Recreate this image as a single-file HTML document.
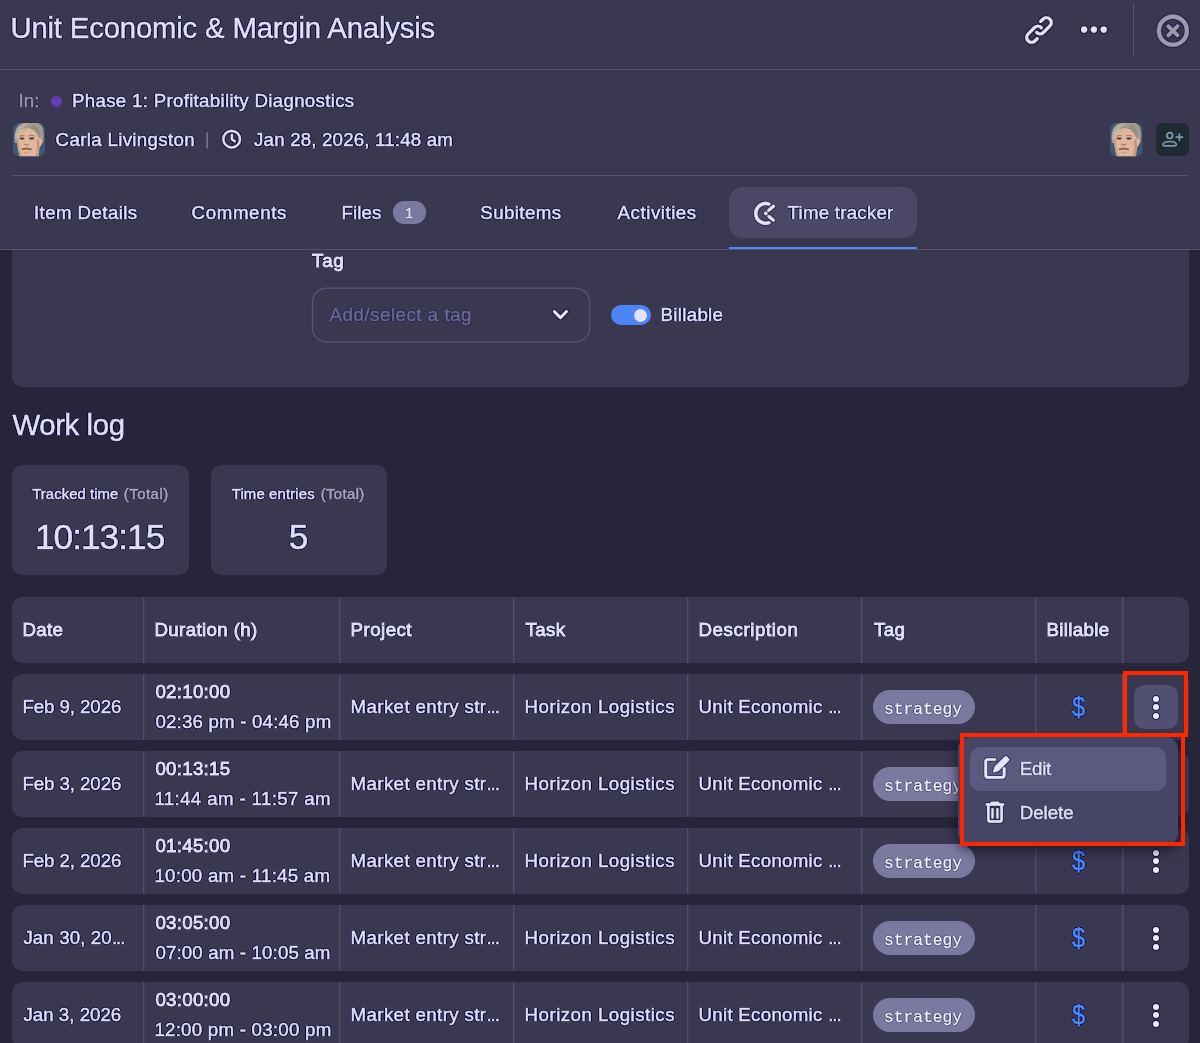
<!DOCTYPE html>
<html lang="en">
<head>
<meta charset="utf-8">
<title>Unit Economic &amp; Margin Analysis</title>
<style>
html,body{margin:0;padding:0;}
body{width:1200px;height:1043px;overflow:hidden;position:relative;background:#272539;font-family:"Liberation Sans",sans-serif;}
.a{position:absolute;box-sizing:border-box;}
.t{position:absolute;white-space:pre;line-height:1;font-family:"Liberation Sans",sans-serif;z-index:2;text-shadow:1px 0 .4px #06053c,-1px 0 .4px #06053c,0 1px .4px #06053c,0 -1px .4px #06053c,1px 0 .4px #06053c,-1px 0 .4px #06053c,0 1px .4px #06053c,0 -1px .4px #06053c;}
.ts{text-shadow:1px 0 .4px rgba(6,5,60,.45),-1px 0 .4px rgba(6,5,60,.45),0 1px .4px rgba(6,5,60,.45),0 -1px .4px rgba(6,5,60,.45);}
.hdr{left:0;top:0;width:1200px;height:249px;background:#3a3750;}
.ln{background:#56536e;}
.panel{left:12px;top:250px;width:1177px;height:136.5px;background:#3a3750;border-radius:0 0 10px 10px;}
.sel{left:312px;top:288px;width:278px;height:54px;border:1px solid #524f6b;border-radius:16px;}
.tog{left:611px;top:305px;width:40px;height:20px;border-radius:10px;background:#4d85f6;}
.knob{left:634.2px;top:308.5px;width:13px;height:13px;border-radius:50%;background:#e2e1f7;}
.card{top:465px;width:176.5px;height:110px;border-radius:10px;background:#3a3750;}
.row{left:12px;width:1177px;height:66px;border-radius:10px;background:#3a3750;}
.vs{width:2px;height:66px;background:linear-gradient(90deg,#514e6a 50%,#423f5a 50%);}
.pill{left:873px;width:101.600px;height:33.600px;border-radius:17px;background:#7c79a1;}
.dol{font-size:27.500px;color:#4d8af5;-webkit-text-stroke:.6px #4d8af5;transform:scaleX(.86);transform-origin:0 0;z-index:2;text-shadow:1px 0 .4px #06053c,-1px 0 .4px #06053c,0 1px .4px #06053c,0 -1px .4px #06053c,1px 0 .4px #06053c,-1px 0 .4px #06053c,0 1px .4px #06053c,0 -1px .4px #06053c;}
.kb{left:1134px;width:44px;height:44px;border-radius:10.500px;background:#525070;}
.dot{width:6.200px;height:6.200px;border-radius:50%;background:#eceaf6;left:1152.900px;box-shadow:0 0 .6px .9px rgba(6,5,60,.7);}
.menu{left:958px;top:737px;width:220px;height:108px;border-radius:12px;background:#464566;box-shadow:0 4px 12px 1px rgba(8,8,20,.6);z-index:5;}
.mi{left:970px;top:747px;width:196px;height:44px;border-radius:10px;background:#5b597e;z-index:6;}
.red{border:4.2px solid #ff2600;z-index:9;}
svg{position:absolute;overflow:visible;}
</style>
</head>
<body>
<div id="root" style="position:absolute;left:0;top:0;width:1200px;height:1043px;will-change:transform">
<svg width="0" height="0" style="left:0;top:0"><defs><filter id="halo" x="-25%" y="-25%" width="150%" height="150%"><feMorphology in="SourceAlpha" operator="dilate" radius="0.7" result="d"/><feGaussianBlur in="d" stdDeviation="0.4" result="b"/><feFlood flood-color="#06053c" flood-opacity="0.55"/><feComposite in2="b" operator="in" result="s"/><feMerge><feMergeNode in="s"/><feMergeNode in="SourceGraphic"/></feMerge></filter><filter id="halo2" x="-25%" y="-25%" width="150%" height="150%"><feMorphology in="SourceAlpha" operator="dilate" radius="0.8" result="d"/><feGaussianBlur in="d" stdDeviation="0.4" result="b"/><feFlood flood-color="#06053c" flood-opacity="0.4"/><feComposite in2="b" operator="in" result="s"/><feMerge><feMergeNode in="s"/><feMergeNode in="SourceGraphic"/></feMerge></filter></defs></svg>
<!-- header -->
<div class="a hdr"></div>
<div class="a ln" style="left:0;top:69px;width:1200px;height:1px;"></div>
<div class="a ln" style="left:12px;top:175px;width:1176px;height:1px;"></div>
<div class="a ln" style="left:0;top:249px;width:1200px;height:1px;"></div>
<div class="a ln" style="left:1133px;top:3px;width:1px;height:54px;"></div>

<!-- link icon -->
<svg style="filter:url(#halo);left:1019px;top:9.650px;z-index:3" width="40" height="40" viewBox="-20 -20 40 40" fill="none" stroke="#e4e2f1" stroke-width="3.050" stroke-linecap="round" stroke-linejoin="round"><g transform="rotate(-45)"><path d="M7.3 -4.87L10.5 -4.87A4.87 4.87 0 0 1 10.5 4.87L1.6 4.87A4.87 4.87 0 0 1 -3.27 0"/><path d="M-7.3 4.87L-10.5 4.87A4.87 4.87 0 0 1 -10.5 -4.87L-1.6 -4.87A4.87 4.87 0 0 1 3.27 0"/></g></svg>
<!-- more dots -->
<svg style="filter:url(#halo);left:1078px;top:24px;z-index:3" width="32" height="12" viewBox="0 0 32 12"><circle cx="6.1" cy="5.6" r="3.1" fill="#e4e2f1"/><circle cx="15.9" cy="5.6" r="3.1" fill="#e4e2f1"/><circle cx="25.7" cy="5.6" r="3.1" fill="#e4e2f1"/></svg>
<!-- close -->
<svg style="filter:url(#halo2);left:1155px;top:13px;z-index:3" width="36" height="36" viewBox="0 0 36 36" fill="none" stroke="#9c9aad" stroke-linecap="round"><circle cx="17.9" cy="17.7" r="14.05" stroke-width="4.1"/><path d="M13.35 13.2L22.45 22.3M22.45 13.2L13.35 22.3" stroke-width="3.7"/></svg>

<!-- In: dot -->
<div class="a" style="left:51px;top:95.5px;width:11px;height:11px;border-radius:50%;background:#673ab7;z-index:3"></div>

<!-- avatars -->
<svg style="left:13px;top:122.5px;z-index:3" width="32" height="33.5" viewBox="0 0 32 33.5"><defs><filter id="bl1" x="-10%" y="-10%" width="120%" height="120%"><feGaussianBlur stdDeviation="0.55"/></filter><clipPath id="avc1"><rect x="0" y="0" width="32" height="33.5" rx="7" ry="7"/></clipPath></defs><g clip-path="url(#avc1)"><rect x="0" y="0" width="32" height="33.5" fill="#3b5874"/><g filter="url(#bl1)">
<rect x="0" y="0" width="32" height="33.5" fill="#3b5874"/>
<path d="M1.800 20C0.300 8 3.500 0 12 0L25 0C31 2 31.700 11 30 20L26 20L6 20Z" fill="#a19a8d"/>
<path d="M2 16C2 6 7 0.500 16 0.300C11 3 6.500 8 4.500 17Z" fill="#b8b2a3"/>
<path d="M4.200 16C4.200 9.500 8.500 5.200 14.500 5C21 5 26.800 8.500 27.600 16C29.300 15.500 30 18.500 28.600 21.500C27.800 23.300 27.100 23.800 26.600 24.300C26.300 27 25.800 30 25.600 33.500L6.800 33.500C4.800 28 4 21 4.200 16Z" fill="#e0b69c"/>
<path d="M7 13C8.500 8 12 5.300 16.500 5C14 6.500 10 9 7 13Z" fill="#c9ac92"/>
<path d="M16.500 5C21 6.500 25 10 26.300 16.500C27.800 12 27 5 21 1.500C20 3 18.500 4.300 16.500 5Z" fill="#958d80"/>
<path d="M4.200 16C4 22 5 28 6.800 33.500L9 33.500C6.800 28 6 21 6 15Z" fill="#c99c84"/>
<path d="M23.500 17C24.500 22 24 28 22.500 33.500L25.400 33.500L26.300 24.300C27 21 26 18 25.500 16Z" fill="#c4957e"/>
<ellipse cx="9" cy="15.500" rx="2.500" ry="1.100" fill="#3e3037"/>
<ellipse cx="18.600" cy="15.500" rx="2.700" ry="1.100" fill="#3e3037"/>
<path d="M6 13.300q3-1.400 5.800-.4M15.500 12.900q3-1.200 6.200.3" stroke="#8d6f5e" stroke-width=".9" fill="none"/>
<path d="M11.300 21.200q2 1.500 4.200 0" stroke="#b07f68" stroke-width="1.300" fill="none" stroke-linecap="round"/>
<path d="M9.300 26.300q4.300-1.300 8.600 0" stroke="#855a50" stroke-width="1.700" fill="none" stroke-linecap="round"/>
<path d="M10.500 29q3.300 1.300 6.500 0" stroke="#c99c84" stroke-width="1" fill="none"/>
</g></g></svg>
<svg style="left:1109.5px;top:122.5px;z-index:3" width="32.5" height="33.5" viewBox="0 0 32 33.5" preserveAspectRatio="none"><defs><filter id="bl2" x="-10%" y="-10%" width="120%" height="120%"><feGaussianBlur stdDeviation="0.55"/></filter><clipPath id="avc2"><rect x="0" y="0" width="32" height="33.5" rx="7" ry="7"/></clipPath></defs><g clip-path="url(#avc2)"><rect x="0" y="0" width="32" height="33.5" fill="#3b5874"/><g filter="url(#bl2)">
<rect x="0" y="0" width="32" height="33.5" fill="#3b5874"/>
<path d="M1.800 20C0.300 8 3.500 0 12 0L25 0C31 2 31.700 11 30 20L26 20L6 20Z" fill="#a19a8d"/>
<path d="M2 16C2 6 7 0.500 16 0.300C11 3 6.500 8 4.500 17Z" fill="#b8b2a3"/>
<path d="M4.200 16C4.200 9.500 8.500 5.200 14.500 5C21 5 26.800 8.500 27.600 16C29.300 15.500 30 18.500 28.600 21.500C27.800 23.300 27.100 23.800 26.600 24.300C26.300 27 25.800 30 25.600 33.500L6.800 33.500C4.800 28 4 21 4.200 16Z" fill="#e0b69c"/>
<path d="M7 13C8.500 8 12 5.300 16.500 5C14 6.500 10 9 7 13Z" fill="#c9ac92"/>
<path d="M16.500 5C21 6.500 25 10 26.300 16.500C27.800 12 27 5 21 1.500C20 3 18.500 4.300 16.500 5Z" fill="#958d80"/>
<path d="M4.200 16C4 22 5 28 6.800 33.500L9 33.500C6.800 28 6 21 6 15Z" fill="#c99c84"/>
<path d="M23.500 17C24.500 22 24 28 22.500 33.500L25.400 33.500L26.300 24.300C27 21 26 18 25.500 16Z" fill="#c4957e"/>
<ellipse cx="9" cy="15.500" rx="2.500" ry="1.100" fill="#3e3037"/>
<ellipse cx="18.600" cy="15.500" rx="2.700" ry="1.100" fill="#3e3037"/>
<path d="M6 13.300q3-1.400 5.800-.4M15.500 12.900q3-1.200 6.200.3" stroke="#8d6f5e" stroke-width=".9" fill="none"/>
<path d="M11.300 21.200q2 1.500 4.200 0" stroke="#b07f68" stroke-width="1.300" fill="none" stroke-linecap="round"/>
<path d="M9.300 26.300q4.300-1.300 8.600 0" stroke="#855a50" stroke-width="1.700" fill="none" stroke-linecap="round"/>
<path d="M10.500 29q3.300 1.300 6.500 0" stroke="#c99c84" stroke-width="1" fill="none"/>
</g></g></svg>
<!-- pipe -->
<svg style="left:200px;top:128px;z-index:3" width="14" height="24" viewBox="200 128 14 24"><path d="M207.150 132.400V148.500" stroke="#7b798f" stroke-width="1.5" fill="none"/></svg>
<!-- clock -->
<svg style="filter:url(#halo);left:220.800px;top:129.300px;z-index:3" width="21" height="21" viewBox="0 0 21 21" fill="none" stroke="#e0def0" stroke-width="2.150" stroke-linecap="round" stroke-linejoin="round"><circle cx="10.700" cy="10.200" r="8.350"/><path d="M10.950 5.900v4.500l2.900 1.850"/></svg>
<!-- add user -->
<div class="a" style="left:1156.2px;top:123px;width:32.6px;height:32.6px;border-radius:6.5px;background:#1f2a33;z-index:3"></div>
<svg style="left:1161px;top:131px;z-index:4" width="24" height="18" viewBox="0 0 24 18" fill="none" stroke="#7f9bb0" stroke-width="1.7" stroke-linecap="round"><circle cx="8.7" cy="4.6" r="2.9"/><path d="M3.9 14.9c-1.6 0-2.2-.9-1.7-2.1c.8-1.6 3-2.3 6.5-2.3s5.700.7 6.500 2.300c.5 1.200-.1 2.100-1.700 2.100z"/><path d="M18.400 3.100v6.200M15.300 6.200h6.200"/></svg>

<!-- tabs -->
<div class="a" style="left:392.5px;top:201px;width:33.8px;height:22.5px;border-radius:11.3px;background:#7c79a1;z-index:1"></div>
<div class="a" style="left:729px;top:187px;width:188px;height:51px;border-radius:14px;background:#4b4867;z-index:1"></div>
<div class="a" style="left:729px;top:247px;width:188px;height:2.400px;background:#4d88f3;z-index:3"></div>
<svg style="filter:url(#halo2);left:752px;top:200px;z-index:3" width="26" height="27" viewBox="752 200 26 27" fill="none" stroke="#e4e2f1" stroke-linecap="round"><path d="M768.800 204A9.900 9.900 0 1 0 768.800 222.800" stroke-width="3.300"/><path d="M768.600 210.300L773.600 206.100M768.900 216.500L773.400 220.200" stroke-width="3"/><circle cx="765.750" cy="213.400" r="1.800" fill="#e4e2f1" stroke="none"/></svg>

<!-- panel -->
<div class="a panel"></div>
<svg style="left:300px;top:280px;z-index:1" width="300" height="70" viewBox="300 280 300 70" fill="none" stroke="#58567b" stroke-width="1.2"><rect x="312.400" y="288.050" width="277.300" height="54.050" rx="14.500"/></svg>
<svg style="filter:url(#halo);left:551px;top:307px;z-index:3" width="20" height="16" viewBox="551 307 20 16" fill="none" stroke="#e8e6f6" stroke-width="2.700" stroke-linecap="round" stroke-linejoin="round"><path d="M554.300 311.500l6.100 6.200l6.100-6.200"/></svg>
<div class="a tog"></div><div class="a knob"></div>

<!-- cards -->
<div class="a card" style="left:12.400px"></div>
<div class="a card" style="left:210.600px"></div>

<!-- table -->
<div class="a row" style="top:597px;height:66.300px"></div>
<div class="a vs" style="left:143px;top:597px;height:66.3px"></div>
<div class="a vs" style="left:339px;top:597px;height:66.3px"></div>
<div class="a vs" style="left:513px;top:597px;height:66.3px"></div>
<div class="a vs" style="left:687px;top:597px;height:66.3px"></div>
<div class="a vs" style="left:861px;top:597px;height:66.3px"></div>
<div class="a vs" style="left:1035px;top:597px;height:66.3px"></div>
<div class="a vs" style="left:1122px;top:597px;height:66.3px"></div>
<div class="a row" style="top:674px"></div>
<div class="a vs" style="left:143px;top:674px"></div>
<div class="a vs" style="left:339px;top:674px"></div>
<div class="a vs" style="left:513px;top:674px"></div>
<div class="a vs" style="left:687px;top:674px"></div>
<div class="a vs" style="left:861px;top:674px"></div>
<div class="a vs" style="left:1035px;top:674px"></div>
<div class="a vs" style="left:1122px;top:674px"></div>
<div class="a pill" style="top:690.4px"></div>
<div class="t dol" style="left:1072px;top:692.5px">$</div>
<div class="a kb" style="top:685.3px"></div>
<div class="a dot" style="top:695.9px"></div>
<div class="a dot" style="top:704.1px"></div>
<div class="a dot" style="top:712.5px"></div>
<div class="a row" style="top:751px"></div>
<div class="a vs" style="left:143px;top:751px"></div>
<div class="a vs" style="left:339px;top:751px"></div>
<div class="a vs" style="left:513px;top:751px"></div>
<div class="a vs" style="left:687px;top:751px"></div>
<div class="a vs" style="left:861px;top:751px"></div>
<div class="a vs" style="left:1035px;top:751px"></div>
<div class="a vs" style="left:1122px;top:751px"></div>
<div class="a pill" style="top:767.4px"></div>
<div class="t dol" style="left:1072px;top:769.5px">$</div>
<div class="a dot" style="top:772.9px"></div>
<div class="a dot" style="top:781.1px"></div>
<div class="a dot" style="top:789.5px"></div>
<div class="a row" style="top:828px"></div>
<div class="a vs" style="left:143px;top:828px"></div>
<div class="a vs" style="left:339px;top:828px"></div>
<div class="a vs" style="left:513px;top:828px"></div>
<div class="a vs" style="left:687px;top:828px"></div>
<div class="a vs" style="left:861px;top:828px"></div>
<div class="a vs" style="left:1035px;top:828px"></div>
<div class="a vs" style="left:1122px;top:828px"></div>
<div class="a pill" style="top:844.4px"></div>
<div class="t dol" style="left:1072px;top:846.5px">$</div>
<div class="a dot" style="top:849.9px"></div>
<div class="a dot" style="top:858.1px"></div>
<div class="a dot" style="top:866.5px"></div>
<div class="a row" style="top:905px"></div>
<div class="a vs" style="left:143px;top:905px"></div>
<div class="a vs" style="left:339px;top:905px"></div>
<div class="a vs" style="left:513px;top:905px"></div>
<div class="a vs" style="left:687px;top:905px"></div>
<div class="a vs" style="left:861px;top:905px"></div>
<div class="a vs" style="left:1035px;top:905px"></div>
<div class="a vs" style="left:1122px;top:905px"></div>
<div class="a pill" style="top:921.4px"></div>
<div class="t dol" style="left:1072px;top:923.5px">$</div>
<div class="a dot" style="top:926.9px"></div>
<div class="a dot" style="top:935.1px"></div>
<div class="a dot" style="top:943.5px"></div>
<div class="a row" style="top:982px"></div>
<div class="a vs" style="left:143px;top:982px"></div>
<div class="a vs" style="left:339px;top:982px"></div>
<div class="a vs" style="left:513px;top:982px"></div>
<div class="a vs" style="left:687px;top:982px"></div>
<div class="a vs" style="left:861px;top:982px"></div>
<div class="a vs" style="left:1035px;top:982px"></div>
<div class="a vs" style="left:1122px;top:982px"></div>
<div class="a pill" style="top:998.4px"></div>
<div class="t dol" style="left:1072px;top:1000.5px">$</div>
<div class="a dot" style="top:1003.9px"></div>
<div class="a dot" style="top:1012.1px"></div>
<div class="a dot" style="top:1020.5px"></div>

<!-- menu -->
<div class="a menu"></div>
<div class="a mi"></div>
<svg style="filter:url(#halo2);left:982px;top:754px;z-index:7" width="30" height="28" viewBox="982 754 30 28" fill="none" stroke="#e6e4f3" stroke-width="2.700" stroke-linecap="round" stroke-linejoin="round"><path d="M994.800 759.500h-6.800a2.300 2.300 0 0 0-2.300 2.300v13.300a2.300 2.300 0 0 0 2.300 2.300h13.900a2.300 2.300 0 0 0 2.300-2.300v-6.600"/><path d="M1004.600 757.300a1.900 1.900 0 0 1 2.700 0l.9.900a1.900 1.900 0 0 1 0 2.700l-9.600 9.600l-5 1.400l1.400-5z" fill="#e6e4f3" stroke-width="1"/></svg>
<svg style="filter:url(#halo2);left:983px;top:799px;z-index:7" width="24" height="27" viewBox="983 799 24 27" fill="none" stroke="#e6e4f3" stroke-width="2.500" stroke-linecap="round" stroke-linejoin="round"><path d="M986.900 804.600h16.100M991.800 804.300v-1.300h6.300v1.300"/><path d="M988.300 805.400v14.200a2 2 0 0 0 2 2h9.300a2 2 0 0 0 2-2v-14.200"/><path d="M992.500 809.200v8.400M997.400 809.200v8.400" stroke-width="2.200"/></svg>

<!-- annotations -->
<div class="a red" style="left:1123px;top:671.400px;width:65.200px;height:66px;"></div>
<div class="a red" style="left:960px;top:733.400px;width:225.400px;height:112.400px;"></div>

<div class="t" style="left:10.40px;top:13.00px;font-size:29.3px;letter-spacing:-0.167px;color:#e0def0;-webkit-text-stroke:0.5px #e0def0;">Unit Economic &amp; Margin Analysis</div>
<div class="t ts" style="left:18.40px;top:92.00px;font-size:18.7px;letter-spacing:0.100px;color:#9a98ad;-webkit-text-stroke:0.5px #9a98ad;">In:</div>
<div class="t" style="left:72.00px;top:92.00px;font-size:18.7px;letter-spacing:0.303px;color:#e0def0;-webkit-text-stroke:0.5px #e0def0;">Phase 1: Profitability Diagnostics</div>
<div class="t" style="left:55.60px;top:131.00px;font-size:18.7px;letter-spacing:0.333px;color:#e0def0;-webkit-text-stroke:0.5px #e0def0;">Carla Livingston</div>
<div class="t" style="left:254.10px;top:131.00px;font-size:18.7px;letter-spacing:0.181px;color:#e0def0;-webkit-text-stroke:0.5px #e0def0;">Jan 28, 2026, 11:48 am</div>
<div class="t" style="left:34.00px;top:204.00px;font-size:18.7px;letter-spacing:0.409px;color:#e0def0;-webkit-text-stroke:0.5px #e0def0;">Item Details</div>
<div class="t" style="left:191.50px;top:204.00px;font-size:18.7px;letter-spacing:0.643px;color:#e0def0;-webkit-text-stroke:0.5px #e0def0;">Comments</div>
<div class="t" style="left:341.50px;top:204.00px;font-size:18.7px;letter-spacing:0.125px;color:#e0def0;-webkit-text-stroke:0.5px #e0def0;">Files</div>
<div class="t ts" style="left:404.90px;top:205.00px;font-size:15.2px;letter-spacing:0.000px;color:#e0def0;-webkit-text-stroke:0.5px #e0def0;">1</div>
<div class="t" style="left:480.25px;top:204.00px;font-size:18.7px;letter-spacing:0.429px;color:#e0def0;-webkit-text-stroke:0.5px #e0def0;">Subitems</div>
<div class="t" style="left:617.60px;top:204.00px;font-size:18.7px;letter-spacing:0.533px;color:#e0def0;-webkit-text-stroke:0.5px #e0def0;">Activities</div>
<div class="t" style="left:787.60px;top:204.00px;font-size:18.7px;letter-spacing:0.236px;color:#e0def0;-webkit-text-stroke:0.5px #e0def0;">Time tracker</div>
<div class="t" style="left:312.10px;top:252.00px;font-size:18.7px;letter-spacing:0.700px;color:#e0def0;-webkit-text-stroke:1.0px #e0def0;">Tag</div>
<div class="t ts" style="left:329.50px;top:306.00px;font-size:18.7px;letter-spacing:0.533px;color:#6b6893;-webkit-text-stroke:0.5px #6b6893;">Add/select a tag</div>
<div class="t" style="left:660.50px;top:306.00px;font-size:18.7px;letter-spacing:0.314px;color:#e0def0;-webkit-text-stroke:0.5px #e0def0;">Billable</div>
<div class="t" style="left:12.50px;top:410.00px;font-size:29.3px;letter-spacing:-0.371px;color:#e0def0;-webkit-text-stroke:0.5px #e0def0;">Work log</div>
<div class="t" style="left:32.20px;top:487.00px;font-size:14.9px;letter-spacing:0.055px;color:#e0def0;-webkit-text-stroke:0.5px #e0def0;">Tracked time</div>
<div class="t ts" style="left:123.80px;top:487.00px;font-size:14.9px;letter-spacing:0.500px;color:#a9a7bd;-webkit-text-stroke:0.5px #a9a7bd;">(Total)</div>
<div class="t" style="left:34.90px;top:519.00px;font-size:35.3px;letter-spacing:-1.000px;color:#e0def0;-webkit-text-stroke:0.5px #e0def0;">10:13:15</div>
<div class="t" style="left:231.70px;top:487.00px;font-size:14.9px;letter-spacing:0.145px;color:#e0def0;-webkit-text-stroke:0.5px #e0def0;">Time entries</div>
<div class="t ts" style="left:320.70px;top:487.00px;font-size:14.9px;letter-spacing:0.367px;color:#a9a7bd;-webkit-text-stroke:0.5px #a9a7bd;">(Total)</div>
<div class="t" style="left:288.70px;top:519.00px;font-size:35.3px;letter-spacing:0.000px;color:#e0def0;-webkit-text-stroke:0.5px #e0def0;">5</div>
<div class="t" style="left:22.40px;top:621.00px;font-size:18.7px;letter-spacing:0.333px;color:#e0def0;-webkit-text-stroke:1.0px #e0def0;">Date</div>
<div class="t" style="left:154.40px;top:621.00px;font-size:18.7px;letter-spacing:0.382px;color:#e0def0;-webkit-text-stroke:1.0px #e0def0;">Duration (h)</div>
<div class="t" style="left:350.60px;top:621.00px;font-size:18.7px;letter-spacing:0.467px;color:#e0def0;-webkit-text-stroke:1.0px #e0def0;">Project</div>
<div class="t" style="left:525.60px;top:621.00px;font-size:18.7px;letter-spacing:0.333px;color:#e0def0;-webkit-text-stroke:1.0px #e0def0;">Task</div>
<div class="t" style="left:698.50px;top:621.00px;font-size:18.7px;letter-spacing:0.600px;color:#e0def0;-webkit-text-stroke:1.0px #e0def0;">Description</div>
<div class="t" style="left:874.10px;top:621.00px;font-size:18.7px;letter-spacing:0.300px;color:#e0def0;-webkit-text-stroke:1.0px #e0def0;">Tag</div>
<div class="t" style="left:1046.40px;top:621.00px;font-size:18.7px;letter-spacing:0.371px;color:#e0def0;-webkit-text-stroke:1.0px #e0def0;">Billable</div>
<div class="t" style="left:22.40px;top:698.00px;font-size:18.7px;letter-spacing:-0.080px;color:#e0def0;-webkit-text-stroke:0.5px #e0def0;">Feb 9, 2026</div>
<div class="t" style="left:155.40px;top:683.00px;font-size:18.7px;letter-spacing:0.286px;color:#e0def0;-webkit-text-stroke:1.0px #e0def0;">02:10:00</div>
<div class="t" style="left:155.40px;top:713.00px;font-size:18.7px;letter-spacing:0.189px;color:#e0def0;-webkit-text-stroke:0.5px #e0def0;">02:36 pm - 04:46 pm</div>
<div class="t" style="left:350.60px;top:698.00px;font-size:18.7px;letter-spacing:0.375px;color:#e0def0;-webkit-text-stroke:0.5px #e0def0;">Market entry str<span style="letter-spacing:-1.050px">...</span></div>
<div class="t" style="left:524.60px;top:698.00px;font-size:18.7px;letter-spacing:0.475px;color:#e0def0;-webkit-text-stroke:0.5px #e0def0;">Horizon Logistics</div>
<div class="t" style="left:698.50px;top:698.00px;font-size:18.7px;letter-spacing:0.286px;color:#e0def0;-webkit-text-stroke:0.5px #e0def0;">Unit Economic <span style="letter-spacing:-1.050px">...</span></div>
<div class="t ts" style="left:883.90px;top:702.00px;font-size:16.3px;letter-spacing:0.000px;color:#f4f2fc;font-family:'Liberation Mono',monospace;-webkit-text-stroke:0.3px #f4f2fc;">strategy</div>
<div class="t" style="left:22.40px;top:775.00px;font-size:18.7px;letter-spacing:-0.080px;color:#e0def0;-webkit-text-stroke:0.5px #e0def0;">Feb 3, 2026</div>
<div class="t" style="left:155.40px;top:760.00px;font-size:18.7px;letter-spacing:0.286px;color:#e0def0;-webkit-text-stroke:1.0px #e0def0;">00:13:15</div>
<div class="t" style="left:154.40px;top:790.00px;font-size:18.7px;letter-spacing:0.367px;color:#e0def0;-webkit-text-stroke:0.5px #e0def0;">11:44 am - 11:57 am</div>
<div class="t" style="left:350.60px;top:775.00px;font-size:18.7px;letter-spacing:0.375px;color:#e0def0;-webkit-text-stroke:0.5px #e0def0;">Market entry str<span style="letter-spacing:-1.050px">...</span></div>
<div class="t" style="left:524.60px;top:775.00px;font-size:18.7px;letter-spacing:0.475px;color:#e0def0;-webkit-text-stroke:0.5px #e0def0;">Horizon Logistics</div>
<div class="t" style="left:698.50px;top:775.00px;font-size:18.7px;letter-spacing:0.286px;color:#e0def0;-webkit-text-stroke:0.5px #e0def0;">Unit Economic <span style="letter-spacing:-1.050px">...</span></div>
<div class="t ts" style="left:883.90px;top:779.00px;font-size:16.3px;letter-spacing:0.000px;color:#f4f2fc;font-family:'Liberation Mono',monospace;-webkit-text-stroke:0.3px #f4f2fc;">strategy</div>
<div class="t" style="left:22.40px;top:852.00px;font-size:18.7px;letter-spacing:-0.080px;color:#e0def0;-webkit-text-stroke:0.5px #e0def0;">Feb 2, 2026</div>
<div class="t" style="left:155.40px;top:837.00px;font-size:18.7px;letter-spacing:0.286px;color:#e0def0;-webkit-text-stroke:1.0px #e0def0;">01:45:00</div>
<div class="t" style="left:154.40px;top:867.00px;font-size:18.7px;letter-spacing:0.256px;color:#e0def0;-webkit-text-stroke:0.5px #e0def0;">10:00 am - 11:45 am</div>
<div class="t" style="left:350.60px;top:852.00px;font-size:18.7px;letter-spacing:0.375px;color:#e0def0;-webkit-text-stroke:0.5px #e0def0;">Market entry str<span style="letter-spacing:-1.050px">...</span></div>
<div class="t" style="left:524.60px;top:852.00px;font-size:18.7px;letter-spacing:0.475px;color:#e0def0;-webkit-text-stroke:0.5px #e0def0;">Horizon Logistics</div>
<div class="t" style="left:698.50px;top:852.00px;font-size:18.7px;letter-spacing:0.286px;color:#e0def0;-webkit-text-stroke:0.5px #e0def0;">Unit Economic <span style="letter-spacing:-1.050px">...</span></div>
<div class="t ts" style="left:883.90px;top:856.00px;font-size:16.3px;letter-spacing:0.000px;color:#f4f2fc;font-family:'Liberation Mono',monospace;-webkit-text-stroke:0.3px #f4f2fc;">strategy</div>
<div class="t" style="left:23.40px;top:929.00px;font-size:18.7px;letter-spacing:0.120px;color:#e0def0;-webkit-text-stroke:0.5px #e0def0;">Jan 30, 20<span style="letter-spacing:-1.050px">...</span></div>
<div class="t" style="left:155.40px;top:914.00px;font-size:18.7px;letter-spacing:0.286px;color:#e0def0;-webkit-text-stroke:1.0px #e0def0;">03:05:00</div>
<div class="t" style="left:155.40px;top:944.00px;font-size:18.7px;letter-spacing:0.144px;color:#e0def0;-webkit-text-stroke:0.5px #e0def0;">07:00 am - 10:05 am</div>
<div class="t" style="left:350.60px;top:929.00px;font-size:18.7px;letter-spacing:0.375px;color:#e0def0;-webkit-text-stroke:0.5px #e0def0;">Market entry str<span style="letter-spacing:-1.050px">...</span></div>
<div class="t" style="left:524.60px;top:929.00px;font-size:18.7px;letter-spacing:0.475px;color:#e0def0;-webkit-text-stroke:0.5px #e0def0;">Horizon Logistics</div>
<div class="t" style="left:698.50px;top:929.00px;font-size:18.7px;letter-spacing:0.286px;color:#e0def0;-webkit-text-stroke:0.5px #e0def0;">Unit Economic <span style="letter-spacing:-1.050px">...</span></div>
<div class="t ts" style="left:883.90px;top:933.00px;font-size:16.3px;letter-spacing:0.000px;color:#f4f2fc;font-family:'Liberation Mono',monospace;-webkit-text-stroke:0.3px #f4f2fc;">strategy</div>
<div class="t" style="left:23.40px;top:1006.00px;font-size:18.7px;letter-spacing:0.020px;color:#e0def0;-webkit-text-stroke:0.5px #e0def0;">Jan 3, 2026</div>
<div class="t" style="left:155.40px;top:991.00px;font-size:18.7px;letter-spacing:0.286px;color:#e0def0;-webkit-text-stroke:1.0px #e0def0;">03:00:00</div>
<div class="t" style="left:154.40px;top:1021.00px;font-size:18.7px;letter-spacing:0.244px;color:#e0def0;-webkit-text-stroke:0.5px #e0def0;">12:00 pm - 03:00 pm</div>
<div class="t" style="left:350.60px;top:1006.00px;font-size:18.7px;letter-spacing:0.375px;color:#e0def0;-webkit-text-stroke:0.5px #e0def0;">Market entry str<span style="letter-spacing:-1.050px">...</span></div>
<div class="t" style="left:524.60px;top:1006.00px;font-size:18.7px;letter-spacing:0.475px;color:#e0def0;-webkit-text-stroke:0.5px #e0def0;">Horizon Logistics</div>
<div class="t" style="left:698.50px;top:1006.00px;font-size:18.7px;letter-spacing:0.286px;color:#e0def0;-webkit-text-stroke:0.5px #e0def0;">Unit Economic <span style="letter-spacing:-1.050px">...</span></div>
<div class="t ts" style="left:883.90px;top:1010.00px;font-size:16.3px;letter-spacing:0.000px;color:#f4f2fc;font-family:'Liberation Mono',monospace;-webkit-text-stroke:0.3px #f4f2fc;">strategy</div>
<div class="t ts" style="z-index:7;left:1019.70px;top:760.00px;font-size:18.7px;letter-spacing:-0.200px;color:#e0def0;-webkit-text-stroke:0.5px #e0def0;">Edit</div>
<div class="t ts" style="z-index:7;left:1019.70px;top:804.00px;font-size:18.7px;letter-spacing:0.000px;color:#e0def0;-webkit-text-stroke:0.5px #e0def0;">Delete</div>
</div>
</body>
</html>
